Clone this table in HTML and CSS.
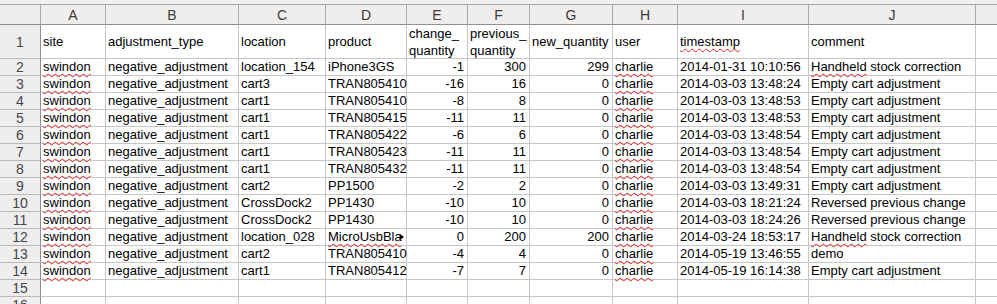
FILE: index.html
```html
<!DOCTYPE html>
<html>
<head>
<meta charset="utf-8">
<link rel="stylesheet" href="styles.css">
</head>
<body>
<div class="top"></div>
<div class="sheet">
  <div class="c corner"></div>
  <div class="c ch">A</div><div class="c ch">B</div><div class="c ch">C</div><div class="c ch">D</div><div class="c ch">E</div><div class="c ch">F</div><div class="c ch">G</div><div class="c ch">H</div><div class="c ch">I</div><div class="c ch">J</div><div class="c ch last"></div>

  <div class="c rh">1</div>
  <div class="c">site</div><div class="c">adjustment_type</div><div class="c">location</div><div class="c">product</div>
  <div class="c wrap">change_<br>quantity</div><div class="c wrap">previous_<br>quantity</div><div class="c">new_quantity</div><div class="c">user</div>
  <div class="c"><span class="sp">timestamp</span></div><div class="c">comment</div><div class="c last"></div>

  <div class="c rh">2</div><div class="c"><span class="sp">swindon</span></div><div class="c">negative_adjustment</div><div class="c">location_154</div><div class="c">iPhone3GS</div><div class="c n">-1</div><div class="c n">300</div><div class="c n">299</div><div class="c"><span class="sp">charlie</span></div><div class="c">2014-01-31 10:10:56</div><div class="c"><span class="sp">Handheld</span>&nbsp;stock correction</div><div class="c last"></div>
  <div class="c rh">3</div><div class="c"><span class="sp">swindon</span></div><div class="c">negative_adjustment</div><div class="c">cart3</div><div class="c">TRAN805410</div><div class="c n">-16</div><div class="c n">16</div><div class="c n">0</div><div class="c"><span class="sp">charlie</span></div><div class="c">2014-03-03 13:48:24</div><div class="c">Empty cart adjustment</div><div class="c last"></div>
  <div class="c rh">4</div><div class="c"><span class="sp">swindon</span></div><div class="c">negative_adjustment</div><div class="c">cart1</div><div class="c">TRAN805410</div><div class="c n">-8</div><div class="c n">8</div><div class="c n">0</div><div class="c"><span class="sp">charlie</span></div><div class="c">2014-03-03 13:48:53</div><div class="c">Empty cart adjustment</div><div class="c last"></div>
  <div class="c rh">5</div><div class="c"><span class="sp">swindon</span></div><div class="c">negative_adjustment</div><div class="c">cart1</div><div class="c">TRAN805415</div><div class="c n">-11</div><div class="c n">11</div><div class="c n">0</div><div class="c"><span class="sp">charlie</span></div><div class="c">2014-03-03 13:48:53</div><div class="c">Empty cart adjustment</div><div class="c last"></div>
  <div class="c rh">6</div><div class="c"><span class="sp">swindon</span></div><div class="c">negative_adjustment</div><div class="c">cart1</div><div class="c">TRAN805422</div><div class="c n">-6</div><div class="c n">6</div><div class="c n">0</div><div class="c"><span class="sp">charlie</span></div><div class="c">2014-03-03 13:48:54</div><div class="c">Empty cart adjustment</div><div class="c last"></div>
  <div class="c rh">7</div><div class="c"><span class="sp">swindon</span></div><div class="c">negative_adjustment</div><div class="c">cart1</div><div class="c">TRAN805423</div><div class="c n">-11</div><div class="c n">11</div><div class="c n">0</div><div class="c"><span class="sp">charlie</span></div><div class="c">2014-03-03 13:48:54</div><div class="c">Empty cart adjustment</div><div class="c last"></div>
  <div class="c rh">8</div><div class="c"><span class="sp">swindon</span></div><div class="c">negative_adjustment</div><div class="c">cart1</div><div class="c">TRAN805432</div><div class="c n">-11</div><div class="c n">11</div><div class="c n">0</div><div class="c"><span class="sp">charlie</span></div><div class="c">2014-03-03 13:48:54</div><div class="c">Empty cart adjustment</div><div class="c last"></div>
  <div class="c rh">9</div><div class="c"><span class="sp">swindon</span></div><div class="c">negative_adjustment</div><div class="c">cart2</div><div class="c">PP1500</div><div class="c n">-2</div><div class="c n">2</div><div class="c n">0</div><div class="c"><span class="sp">charlie</span></div><div class="c">2014-03-03 13:49:31</div><div class="c">Empty cart adjustment</div><div class="c last"></div>
  <div class="c rh">10</div><div class="c"><span class="sp">swindon</span></div><div class="c">negative_adjustment</div><div class="c">CrossDock2</div><div class="c">PP1430</div><div class="c n">-10</div><div class="c n">10</div><div class="c n">0</div><div class="c"><span class="sp">charlie</span></div><div class="c">2014-03-03 18:21:24</div><div class="c">Reversed previous change</div><div class="c last"></div>
  <div class="c rh">11</div><div class="c"><span class="sp">swindon</span></div><div class="c">negative_adjustment</div><div class="c">CrossDock2</div><div class="c">PP1430</div><div class="c n">-10</div><div class="c n">10</div><div class="c n">0</div><div class="c"><span class="sp">charlie</span></div><div class="c">2014-03-03 18:24:26</div><div class="c">Reversed previous change</div><div class="c last"></div>
  <div class="c rh">12</div><div class="c"><span class="sp">swindon</span></div><div class="c">negative_adjustment</div><div class="c">location_028</div><div class="c clip"><span class="clipbox"><span class="sp">MicroUsbBla</span></span><i class="more"></i></div><div class="c n">0</div><div class="c n">200</div><div class="c n">200</div><div class="c"><span class="sp">charlie</span></div><div class="c">2014-03-24 18:53:17</div><div class="c"><span class="sp">Handheld</span>&nbsp;stock correction</div><div class="c last"></div>
  <div class="c rh">13</div><div class="c"><span class="sp">swindon</span></div><div class="c">negative_adjustment</div><div class="c">cart2</div><div class="c">TRAN805410</div><div class="c n">-4</div><div class="c n">4</div><div class="c n">0</div><div class="c"><span class="sp">charlie</span></div><div class="c">2014-05-19 13:46:55</div><div class="c">demo</div><div class="c last"></div>
  <div class="c rh">14</div><div class="c"><span class="sp">swindon</span></div><div class="c">negative_adjustment</div><div class="c">cart1</div><div class="c">TRAN805412</div><div class="c n">-7</div><div class="c n">7</div><div class="c n">0</div><div class="c"><span class="sp">charlie</span></div><div class="c">2014-05-19 16:14:38</div><div class="c">Empty cart adjustment</div><div class="c last"></div>
  <div class="c rh">15</div><div class="c"></div><div class="c"></div><div class="c"></div><div class="c"></div><div class="c"></div><div class="c"></div><div class="c"></div><div class="c"></div><div class="c"></div><div class="c"></div><div class="c last"></div>
  <div class="c rh">16</div><div class="c"></div><div class="c"></div><div class="c"></div><div class="c"></div><div class="c"></div><div class="c"></div><div class="c"></div><div class="c"></div><div class="c"></div><div class="c"></div><div class="c last"></div>
</div>
</body>
</html>
```
FILE: styles.css
```css
html, body {
  margin: 0;
  padding: 0;
  background: #ffffff;
  overflow: hidden;
}
.top {
  height: 4px;
  background: #f2f1f0;
}
.sheet {
  display: grid;
  grid-template-columns: 41px 65px 133px 87px 81px 61px 62px 83px 65px 131px 167px 1fr;
  grid-template-rows: 20px 34px;
  grid-auto-rows: 17px;
  border-top: 1px solid #a9a9a9;
  font-family: "Liberation Sans", Arial, sans-serif;
  font-size: 13px;
  color: #000;
}
.c {
  box-sizing: border-box;
  border-right: 1px solid #c6c6c6;
  border-bottom: 1px solid #c6c6c6;
  display: flex;
  align-items: center;
  padding: 0 0 0 2px;
  white-space: nowrap;
  line-height: 16px;
  position: relative;
  min-width: 0;
}
.c.last { border-right: none; }
.corner, .ch {
  background: #efeeed;
  border-right: 1px solid #a9a9a9;
  border-bottom: 1px solid #8f8f8f;
}
.ch {
  justify-content: center;
  color: #3a3a3a;
  font-size: 14px;
  padding: 0;
}
.ch.last { border-right: none; }
.rh {
  background: #efeeed;
  justify-content: center;
  color: #3f4650;
  font-size: 14px;
  padding: 0;
  border-right: 1px solid #8f8f8f;
  border-bottom: 1px solid #b8b8b8;
}
.wrap {
  white-space: normal;
  line-height: 17px;
}
.n {
  justify-content: flex-end;
  padding-right: 3px;
}
.sp {
  text-decoration: underline wavy #e0201c;
  text-decoration-thickness: 1px;
  text-underline-offset: 2px;
  text-decoration-skip-ink: none;
}
.clipbox {
  display: block;
  width: 74px;
  overflow: hidden;
  padding-bottom: 3px;
  margin-bottom: -3px;
}
.more {
  position: absolute;
  right: 2px;
  top: 5px;
  width: 0;
  height: 0;
  border-top: 3px solid transparent;
  border-bottom: 3px solid transparent;
  border-left: 4px solid #000;
}
```
